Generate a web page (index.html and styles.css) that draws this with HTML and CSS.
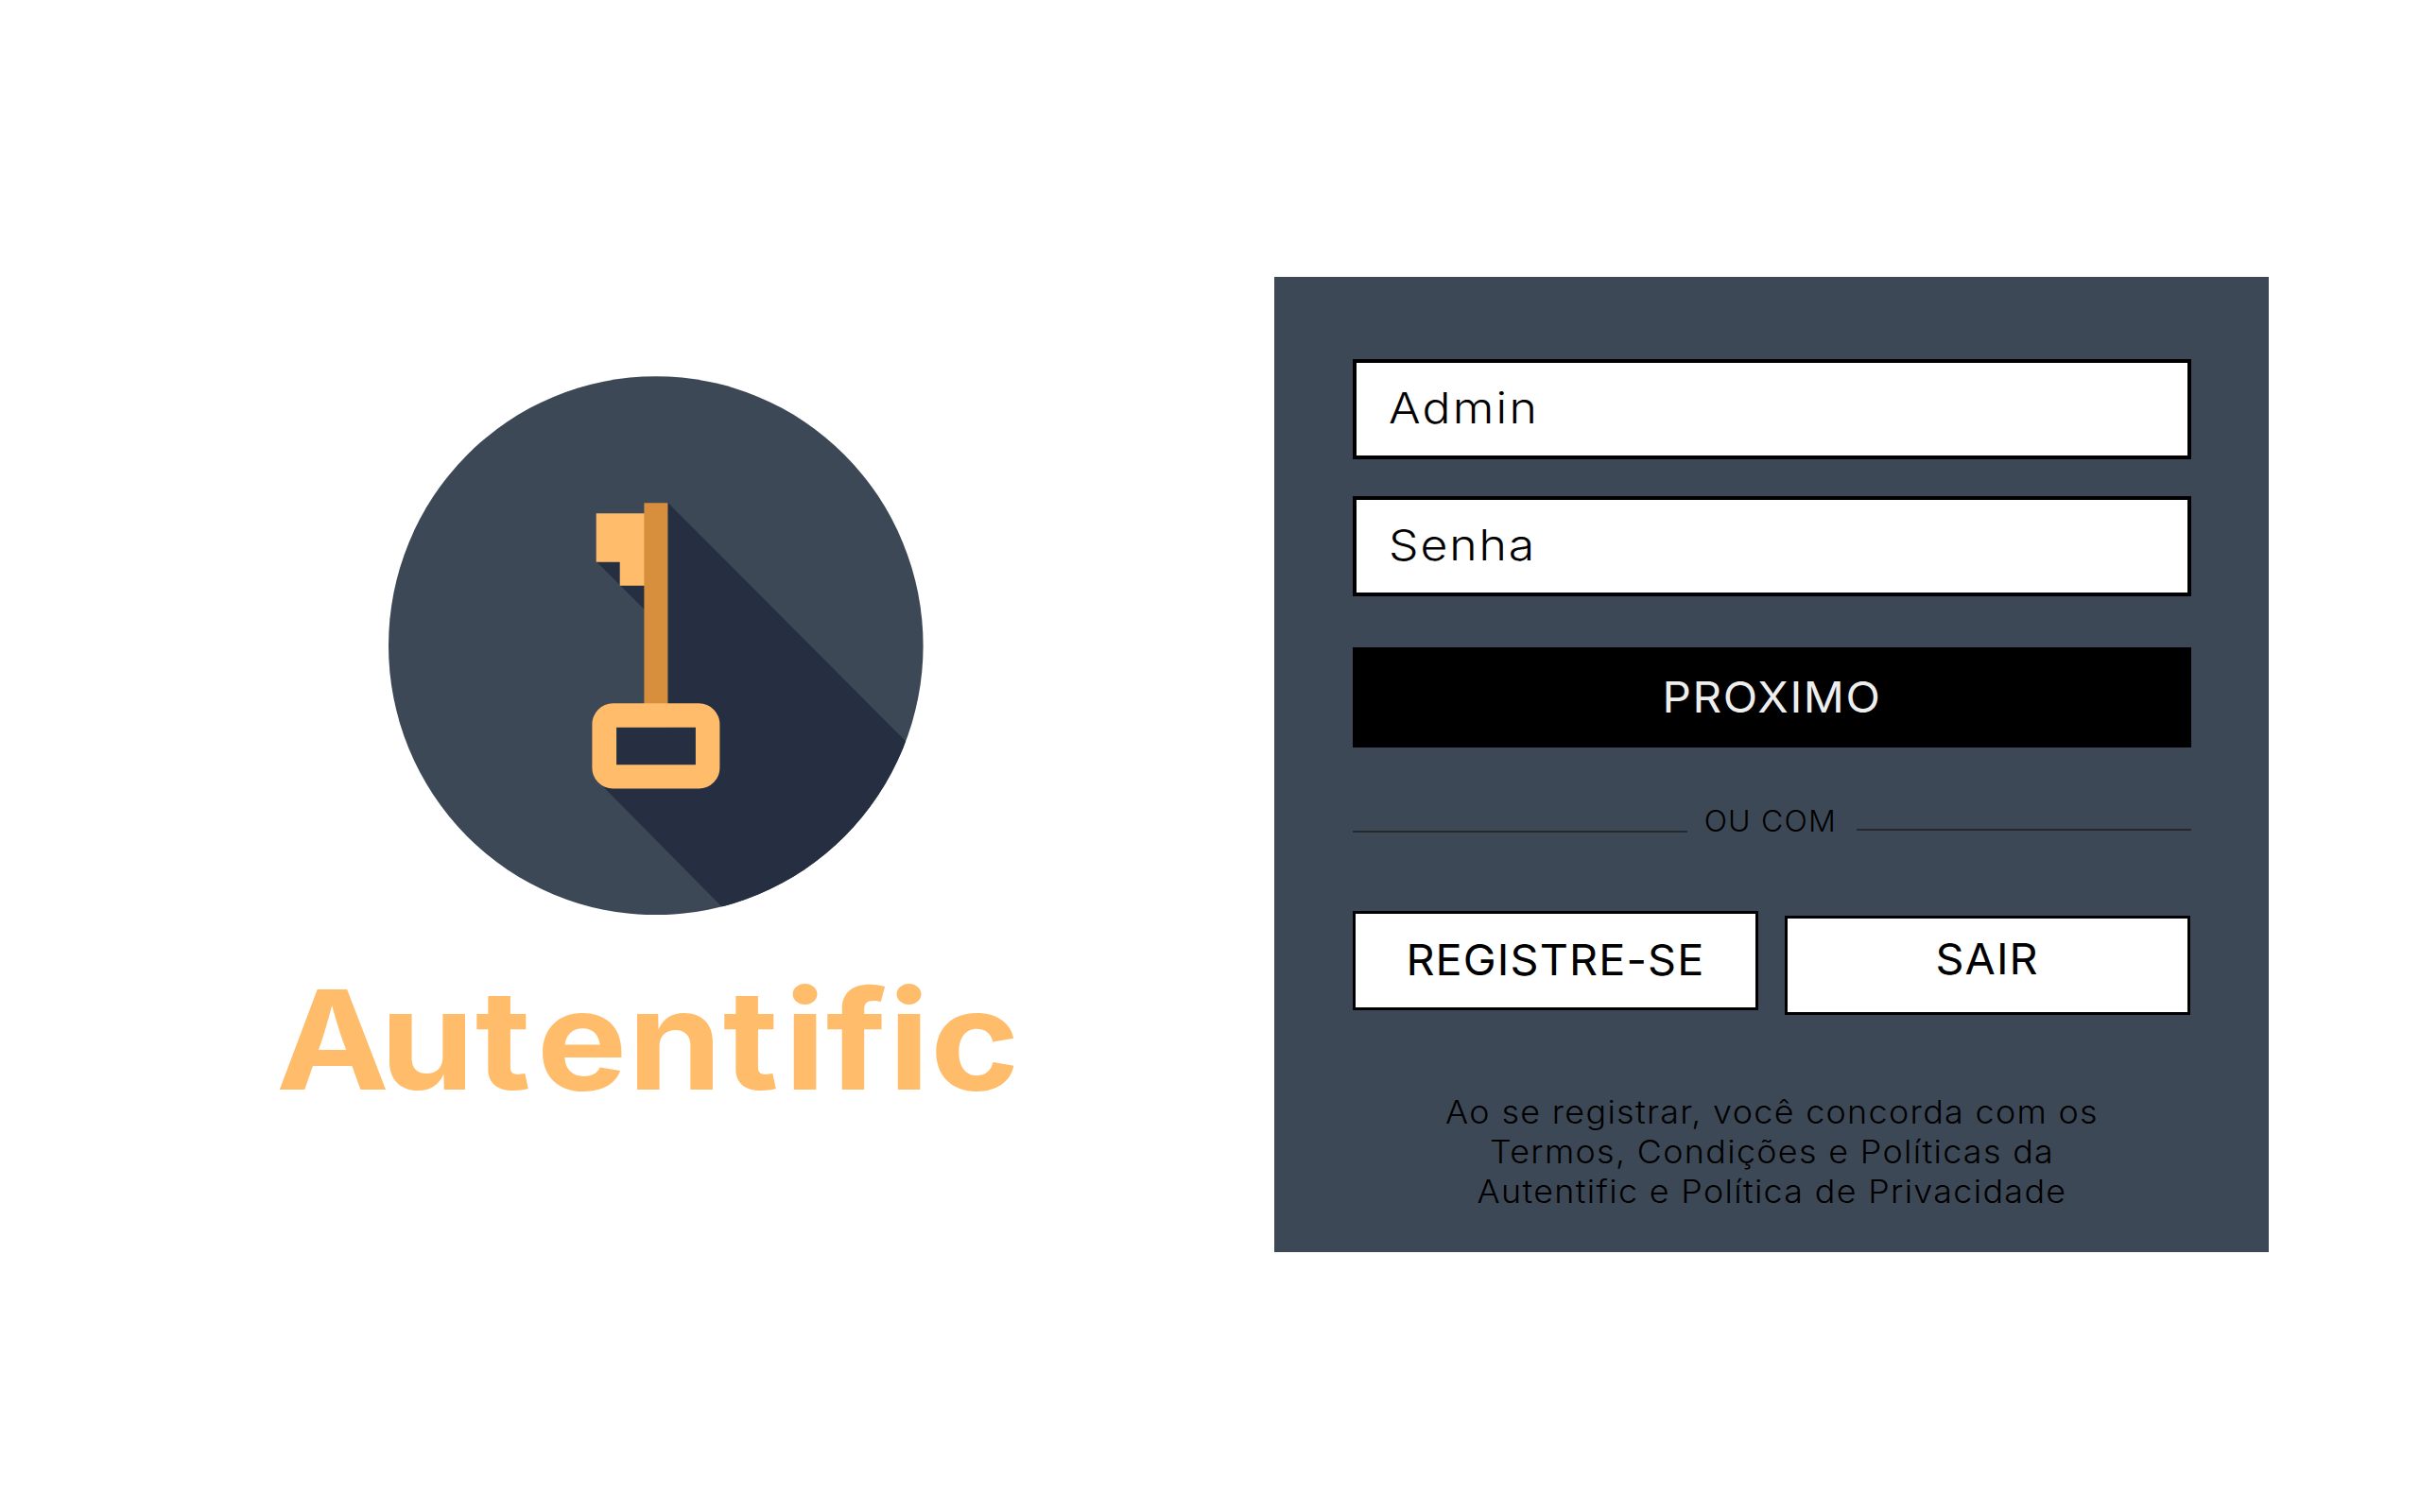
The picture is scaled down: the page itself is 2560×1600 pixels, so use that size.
FILE: index.html
```html
<!DOCTYPE html>
<html lang="pt-BR">
<head>
<meta charset="utf-8">
<title>Autentific</title>
<link rel="stylesheet" href="styles.css">
</head>
<body>
<main class="page">
  <section class="brand">
    <svg class="logo" viewBox="410.6 398.2 566 570.4" aria-hidden="true">
      <defs><clipPath id="disc"><ellipse cx="693.4" cy="683.4" rx="282.8" ry="285"/></clipPath></defs>
      <ellipse cx="693.4" cy="683.4" rx="282.8" ry="285" fill="#3d4856"/>
      <g clip-path="url(#disc)" fill="#252f41">
        <path d="M706 532 1006 833V1000H803L634 829 652 770H706Z"/>
        <path d="M630 594H682V646Z"/>
      </g>
      <path fill="#ffbc6a" d="M630.3 543.5H682V620H655.3V595H630.3Z"/>
      <path fill="#d78f3d" d="M681 532.5H706V746H681Z"/>
      <path fill="#ffbc6a" fill-rule="evenodd" d="M648 744.5H739A22 22 0 0 1 761 767V812A22 22 0 0 1 739 834.700H648A22 22 0 0 1 626 812V767A22 22 0 0 1 648 744.500ZM651.700 770V809.500H735.500V770Z"/>
    </svg>
    <h1 class="brand-name"><span class="kern-a">A</span>u<span class="kern-t">t</span>en<span class="kern-t">t</span>ific</h1>
  </section>
  <form class="panel">
    <div class="field"><span class="label label-user">Admin</span></div>
    <div class="field"><span class="label label-password">Senha</span></div>
    <div class="next"><span class="label label-next">PROXIMO</span></div>
    <div class="divider"><i class="line"></i><span class="label label-or">OU COM</span><i class="line line-right"></i></div>
    <div class="actions">
      <div class="action"><span class="label label-action">REGISTRE-SE</span></div>
      <div class="action action-exit"><span class="label label-action">SAIR</span></div>
    </div>
    <p class="terms">Ao se registrar, você concorda com os<br>Termos, Condições e Políticas da<br>Autentific e Política de Privacidade</p>
  </form>
</main>
</body>
</html>
```
FILE: styles.css
```css
* { box-sizing: border-box; }

body {
  margin: 0;
  background: #fff;
  color: #000;
  font-family: Inter, "Liberation Sans", sans-serif;
}

.page { display: flex; align-items: flex-start; }

/* Brand column */
.brand { width: 1348px; padding-top: 398px; }
.logo { display: block; width: 566px; height: 570.4px; margin-left: 410.6px; }
.brand-name {
  width: 720px;
  margin: 43.6px 0 0 292px;
  font-size: 146px;
  line-height: 176px;
  font-weight: 700;
  letter-spacing: 0.6px;
  white-space: nowrap;
  color: #ffbc6a;
  transform: scaleX(1.1);
  transform-origin: left;
}
.kern-a { letter-spacing: -9px; }
.kern-t { letter-spacing: 5.6px; }

/* Sign-in panel */
.panel {
  width: 1052px;
  height: 1032px;
  margin-top: 293px;
  padding: 87px 82px 0 83px;
  background: #3d4856;
}

.label { display: block; white-space: nowrap; }
.label-user { letter-spacing: 2px; transform: scaleX(1.1); transform-origin: left; }
.label-password { letter-spacing: 1.7px; transform: scaleX(1.1); transform-origin: left; }
.label-next { letter-spacing: 1.55px; transform: scaleX(1.05); }
.label-or { letter-spacing: 1.1px; margin-right: 4px; transform: scaleX(1.05); }
.label-action { letter-spacing: 1.1px; transform: scaleX(1.03); }

.field {
  display: flex;
  align-items: center;
  height: 106px;
  margin-bottom: 39px;
  padding: 0 0 3px 34px;
  border: 4px solid #000;
  background: #fff;
  font-size: 45.4px;
  font-weight: 300;
}

.next {
  display: flex;
  align-items: center;
  justify-content: center;
  height: 106px;
  margin-top: 53.6px;
  background: #000;
  color: #eee;
  font-size: 45.4px;
}

.divider {
  display: flex;
  justify-content: space-between;
  height: 28px;
  margin-top: 64.4px;
  font-size: 30.5px;
  line-height: 28px;
  font-weight: 300;
}
.line { width: 354px; height: 2px; margin-top: 24px; background: #26282c; }
.line-right { margin-top: 22px; }

.actions { display: flex; gap: 28px; align-items: flex-start; margin-top: 81px; }
.action {
  display: flex;
  align-items: center;
  justify-content: center;
  width: 429px;
  height: 105px;
  padding-bottom: 1px;
  border: 3.5px solid #000;
  background: #fff;
  font-size: 45.4px;
}
.action-exit { margin-top: 5px; padding-bottom: 13px; }

.terms {
  margin: 82px 0 0;
  text-align: center;
  white-space: nowrap;
  font-size: 33.5px;
  line-height: 42px;
  font-weight: 300;
  letter-spacing: 1.25px;
  transform: scaleX(1.07);
}
```
